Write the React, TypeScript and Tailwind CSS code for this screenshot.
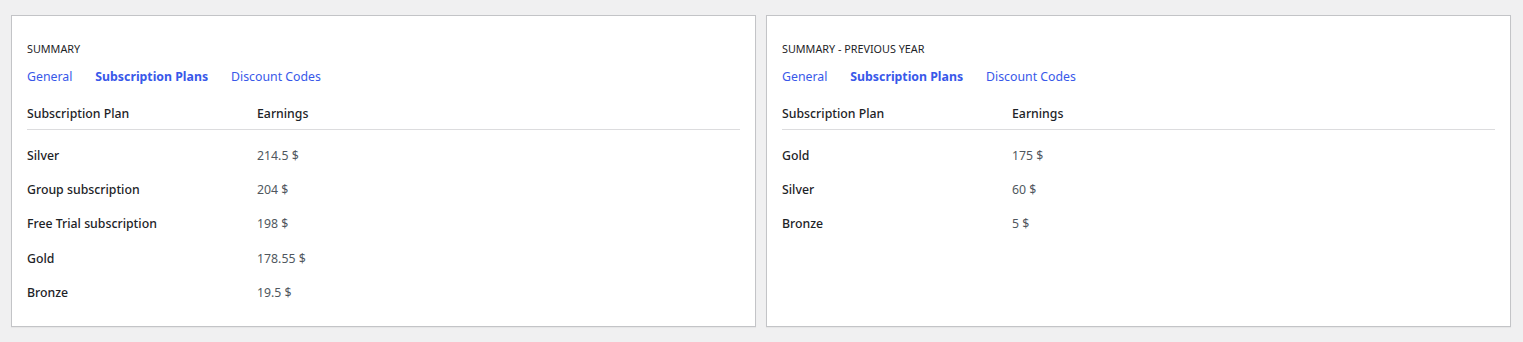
import React from "react";

type Row = { plan: string; earnings: string };

const current: Row[] = [
  { plan: "Silver", earnings: "214.5 $" },
  { plan: "Group subscription", earnings: "204 $" },
  { plan: "Free Trial subscription", earnings: "198 $" },
  { plan: "Gold", earnings: "178.55 $" },
  { plan: "Bronze", earnings: "19.5 $" },
];

const previous: Row[] = [
  { plan: "Gold", earnings: "175 $" },
  { plan: "Silver", earnings: "60 $" },
  { plan: "Bronze", earnings: "5 $" },
];

function SummaryCard({ title, rows }: { title: string; rows: Row[] }) {
  return (
    <div className="flex-1 h-[312px] bg-white border border-[#c3c4c7] shadow-[0_1px_1px_rgba(0,0,0,0.04)] px-[15px] pt-[25px]">
      <h2 className="text-[10.8px] leading-[16px] uppercase text-[#1d2327]">{title}</h2>
      <div className="flex gap-[23px] mt-[10px] text-[12.3px] leading-[20px]">
        <a className="text-[#3858e9]">General</a>
        <a className="text-[#3858e9] font-bold">Subscription Plans</a>
        <a className="text-[#3858e9]">Discount Codes</a>
      </div>
      <div className="mt-[17px] flex border-b border-[#dcdcde] pb-[5px] text-[12.3px] leading-[20px] font-medium text-[#1d2327]">
        <div className="w-[230px]">Subscription Plan</div>
        <div>Earnings</div>
      </div>
      <div className="mt-[9px]">
        {rows.map((r) => (
          <div key={r.plan} className="flex items-center h-[34.25px] text-[12.3px]">
            <div className="w-[230px] font-medium text-[#1d2327]">{r.plan}</div>
            <div className="text-[#50575e]">{r.earnings}</div>
          </div>
        ))}
      </div>
    </div>
  );
}

export default function App() {
  return (
    <div
      className="h-[342px] bg-[#f0f0f1] flex gap-[10px] pt-[15px] pl-[11px] pr-[12px]"
      style={{ fontFamily: '"Noto Sans", "Open Sans", sans-serif' }}
    >
      <SummaryCard title="Summary" rows={current} />
      <SummaryCard title="Summary - Previous Year" rows={previous} />
    </div>
  );
}
